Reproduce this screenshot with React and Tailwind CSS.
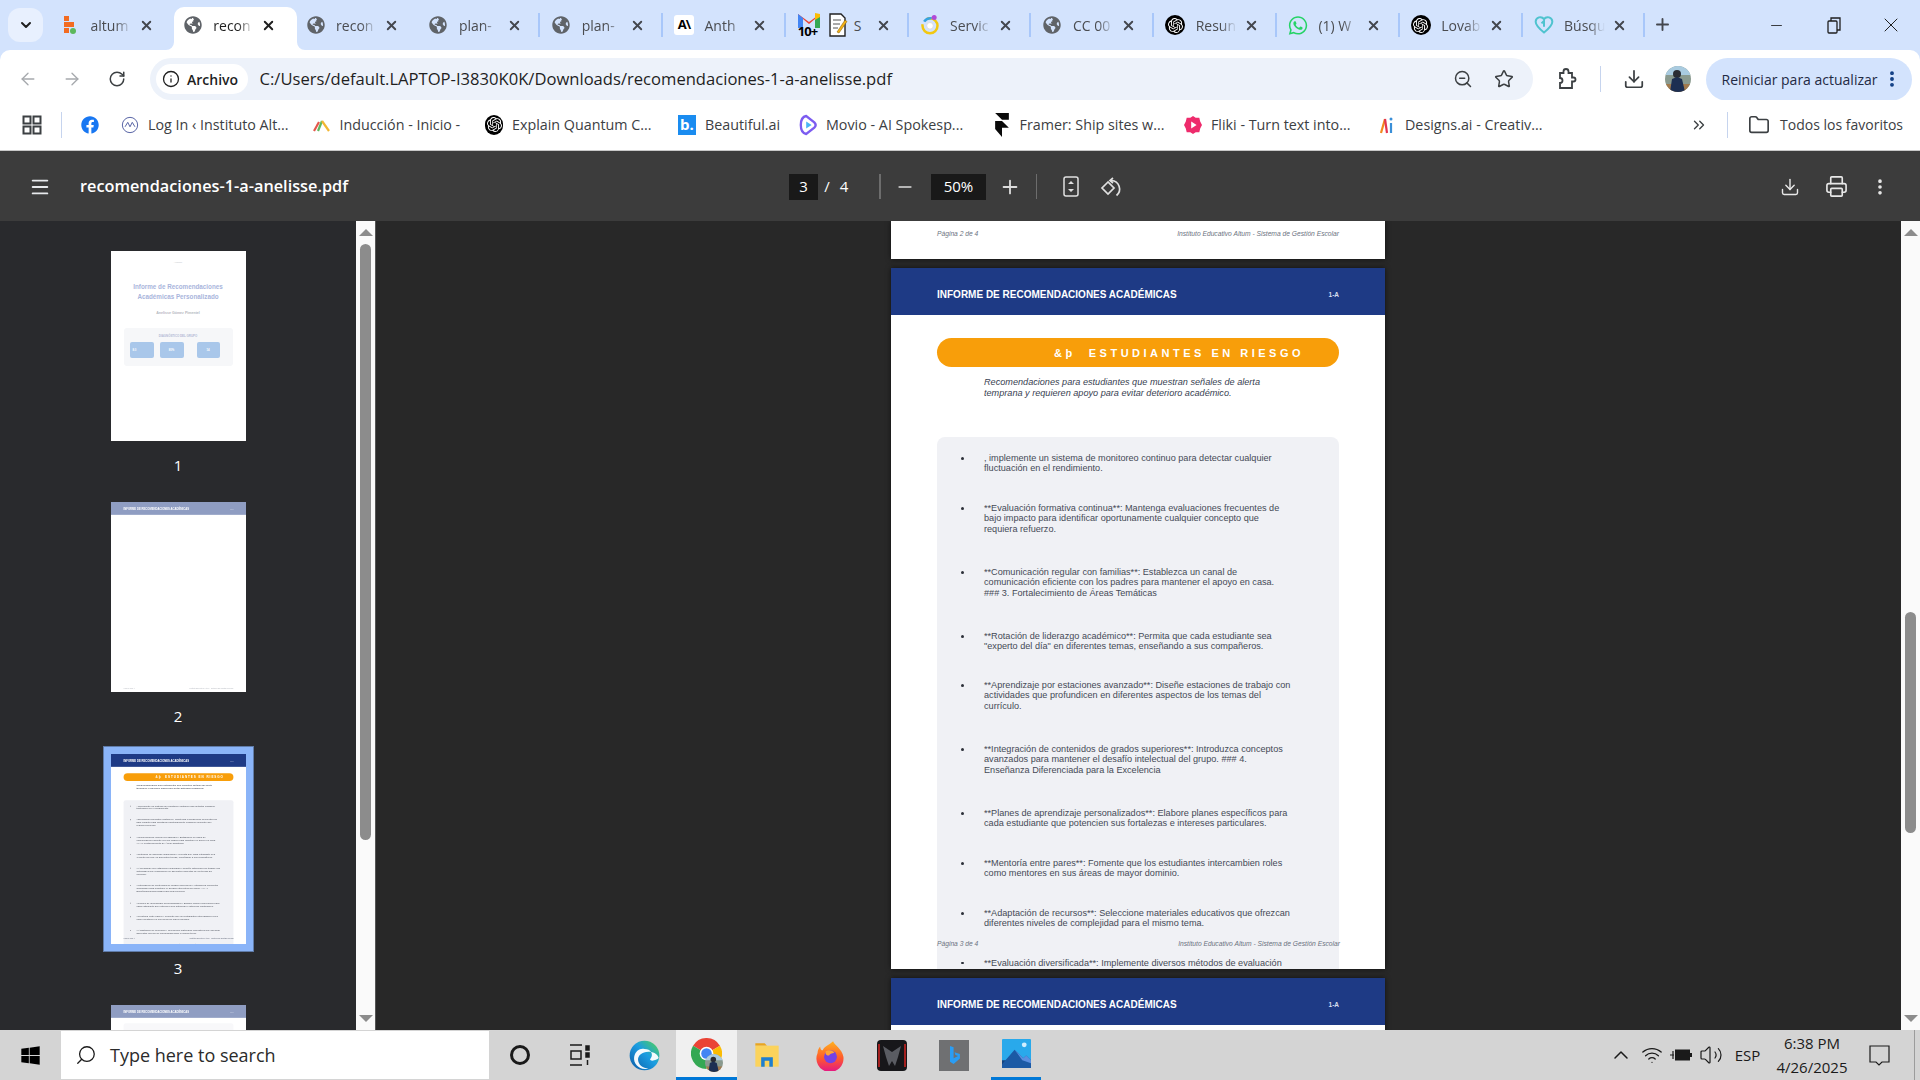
import { ArrowLeft, ArrowRight, RotateCw, Info, ZoomOut, Star, Download, EllipsisVertical, ChevronDown, ChevronUp, ChevronsRight, Folder, Menu, Minus, Plus, Printer, Search, X, Wifi, Volume2 } from "lucide-react";
import { FaGlobeAmericas, FaFacebook, FaWhatsapp, FaWindows } from "react-icons/fa";
import { SiOpenai } from "react-icons/si";

const Globe = () => <FaGlobeAmericas size={18} className="text-[#5f6368]" />;

const OpenAi = ({ size = 20 }) => (
  <span className="flex items-center justify-center rounded-full bg-black" style={{ width: size, height: size }}>
    <SiOpenai size={size - 5} className="text-white" />
  </span>
);

const Altum = () => (
  <svg width="14" height="20" viewBox="0 0 14 20">
    <rect x="1" y="1" width="5" height="5" fill="#f26b21" />
    <rect x="1" y="7" width="10" height="5" fill="#f26b21" />
    <rect x="1" y="13" width="5" height="5" fill="#f26b21" />
    <circle cx="10" cy="16" r="3" fill="#5cb85c" />
  </svg>
);

const Gmail10 = () => (
  <span className="relative block h-[28px] w-[24px]">
    <svg width="24" height="18" viewBox="0 0 24 18">
      <path d="M1 17V3l11 8 11-8v14h-5V8l-6 5-6-5v9z" fill="#ea4335" />
      <path d="M1 3v14h5V7z" fill="#4285f4" />
      <path d="M23 3v14h-5V7z" fill="#34a853" />
      <path d="M18 2l5 1v3l-5 3z" fill="#fbbc04" />
    </svg>
    <span className="absolute left-[1px] top-[13px] text-[13px] font-bold leading-[14px] tracking-[-1px] text-black">10+</span>
  </span>
);

const Note = () => (
  <svg width="20" height="26" viewBox="0 0 20 26">
    <path d="M2 2h11l4 4v18H2z" fill="#fff" stroke="#222" strokeWidth="1.4" />
    <path d="M5 8h8M5 12h7M5 16h5" stroke="#555" />
    <path d="M9 20L17 8l2 1.5L11 21z" fill="#f5b316" stroke="#7a5200" strokeWidth=".5" />
  </svg>
);

const ServIcon = () => (
  <svg width="24" height="26" viewBox="0 0 24 26" fill="none">
    <circle cx="12" cy="14" r="9" stroke="#f2c811" strokeWidth="3" strokeDasharray="30 8" />
    <path d="M5 9a9 9 0 0 1 9-4" stroke="#37a3e0" strokeWidth="3" />
    <circle cx="17" cy="4" r="3" fill="#b04ad8" />
    <circle cx="12" cy="14" r="4" fill="#fff" stroke="#d8d8d8" />
  </svg>
);

const Lovable = () => (
  <svg width="20" height="20" viewBox="0 0 24 24" fill="none" stroke="#4fc3cf" strokeWidth="2.4">
    <path d="M12 21C6 16 2 12 2 8a5.500 5.500 0 0 1 10-3 5.500 5.500 0 0 1 10 3c0 4-4 8-10 13z" />
    <path d="M12 14V7l-3 3" />
  </svg>
);

const tabs = [
  { icon: <Altum />, label: "altum" },
  { icon: <Globe />, label: "recon", active: true },
  { icon: <Globe />, label: "recon" },
  { icon: <Globe />, label: "plan-", sep: true },
  { icon: <Globe />, label: "plan-", sep: true },
  { icon: <span className="flex h-[20px] w-[20px] items-center justify-center rounded-[3px] bg-white text-[13px] font-bold tracking-[-1px] text-black">A\</span>, label: "Anth", sep: true },
  { icon: null, label: "S", gmail: true, sep: true },
  { icon: <ServIcon />, label: "Servic", sep: true },
  { icon: <Globe />, label: "CC 00", sep: true },
  { icon: <OpenAi />, label: "Resun", sep: true },
  { icon: <FaWhatsapp size={21} className="text-[#25d366]" />, label: "(1) W", sep: true },
  { icon: <OpenAi />, label: "Lovab", sep: true },
  { icon: <Lovable />, label: "Búsqu", sep: true },
];

const Tab = ({ tab }) => (
  <div className={`relative mt-[7px] flex h-[43px] w-[122.8px] shrink-0 items-center pb-[7px] ${tab.active ? "rounded-t-[10px] bg-white text-[#1f1f1f]" : "text-[#4a4c50]"}`}>
    {tab.active && (
      <>
        <svg className="absolute bottom-0 left-[-8px]" width="8" height="8" viewBox="0 0 8 8"><path d="M8 0v8H0a8 8 0 0 0 8-8z" fill="#fff" /></svg>
        <svg className="absolute bottom-0 right-[-8px]" width="8" height="8" viewBox="0 0 8 8"><path d="M0 0v8h8a8 8 0 0 1-8-8z" fill="#fff" /></svg>
      </>
    )}
    {tab.gmail ? (
      <>
        <span className="ml-[9px] flex w-[24px] justify-center"><Gmail10 /></span>
        <span className="ml-[7px] flex w-[20px] justify-center"><Note /></span>
        <span className="ml-[6px] w-[22px] overflow-hidden whitespace-nowrap text-[14px]">{tab.label}</span>
        <X size={15} strokeWidth={3} className="ml-[0.500px] shrink-0 text-[#44474e]" />
      </>
    ) : (
      <>
        <span className="ml-[9px] flex w-[20px] justify-center">{tab.icon}</span>
        <span className="ml-[10.500px] w-[41px] overflow-hidden whitespace-nowrap text-[14px] [mask-image:linear-gradient(to_right,black_60%,transparent)]">{tab.label}</span>
        <X size={15} strokeWidth={3} className={`ml-[7px] shrink-0 ${tab.active ? "text-[#1f1f1f]" : "text-[#44474e]"}`} />
      </>
    )}
    {tab.sep && <span className="absolute right-[2px] top-[6px] h-[24px] w-[2px] bg-[#a8c7fa]" />}
  </div>
);

const TabStrip = () => (
  <div className="flex h-[50px] shrink-0 bg-[#d3e3fd]">
    <div className="ml-[8px] mt-[8px] flex h-[34px] w-[35px] items-center justify-center rounded-[12px] bg-[#e8f0fe]">
      <ChevronDown size={16} strokeWidth={3} className="text-[#1f1f1f]" />
    </div>
    <div className="ml-[8px] flex">
      {tabs.map((tab, i) => <Tab key={i} tab={tab} />)}
    </div>
    <Plus size={19} strokeWidth={2.4} className="ml-[6px] mt-[15px] text-[#44474e]" />
    <div className="ml-auto flex h-[50px] text-[#1f1f1f]">
      <div className="flex w-[57px] items-center justify-center"><Minus size={17} strokeWidth={1.2} /></div>
      <div className="flex w-[57px] items-center justify-center">
        <svg width="14" height="17" viewBox="0 0 14 17" fill="none" stroke="currentColor" strokeWidth="1.3"><rect x="1" y="4" width="9" height="12" rx="1" /><path d="M4 4V1h9v12h-3" /></svg>
      </div>
      <div className="mr-[1px] flex w-[57px] items-center justify-center"><X size={24} strokeWidth={1} /></div>
    </div>
  </div>
);

const Avatar = ({ size = 26 }) => (
  <svg width={size} height={size} viewBox="0 0 26 26">
    <defs><clipPath id="av"><circle cx="13" cy="13" r="13" /></clipPath></defs>
    <g clipPath="url(#av)">
      <rect width="26" height="26" fill="#8a9a8f" />
      <rect width="26" height="9" fill="#a9cbe0" />
      <rect y="18" width="26" height="8" fill="#a27a4d" />
      <circle cx="12" cy="8" r="4" fill="#2a2c33" />
      <path d="M5 26l2-13 5-2 5 2 3 13z" fill="#1d2f52" />
    </g>
  </svg>
);

const Extension = () => (
  <svg width="22" height="24" viewBox="0 0 22 24" fill="none" stroke="#3c4043" strokeWidth="1.800">
    <path d="M4 6h3.500V4.500a2.500 2.500 0 0 1 5 0V6H16v4.500h1.500a2 2 0 0 1 0 4H16V21H4v-5a2.500 2.500 0 0 0 0-5z" />
  </svg>
);

const AddressBar = () => (
  <div className="flex h-[50px] shrink-0 items-center rounded-t-[10px] bg-white pl-[6px] pt-[8px] text-[#5f6368]">
    <div className="flex w-[44px] justify-center text-[#a6a9ad]"><ArrowLeft size={20} strokeWidth={1.6} /></div>
    <div className="flex w-[44px] justify-center text-[#a6a9ad]"><ArrowRight size={20} strokeWidth={1.6} /></div>
    <div className="flex w-[46px] justify-center text-[#3c4043]"><RotateCw size={18} strokeWidth={2} /></div>
    <div className="ml-[10px] flex h-[42px] w-[1382.500px] items-center rounded-full bg-[#edf2fa] pl-[6px] pr-[19px]">
      <div className="flex h-[30px] w-[92px] items-center rounded-full bg-white pl-[6px] text-[#1f1f1f]">
        <Info size={18} strokeWidth={1.7} />
        <span className="ml-[7px] text-[14px] font-semibold">Archivo</span>
      </div>
      <span className="ml-[11.500px] whitespace-nowrap text-[16.600px] text-[#1f1f1f]">C:/Users/default.LAPTOP-I3830K0K/Downloads/recomendaciones-1-a-anelisse.pdf</span>
      <ZoomOut size={20} strokeWidth={1.8} className="ml-auto text-[#3c4043]" />
      <Star size={20} strokeWidth={1.8} className="ml-[21px] text-[#3c4043]" />
    </div>
    <div className="ml-[17px] flex w-[34px] justify-center"><Extension /></div>
    <span className="ml-[16px] h-[26px] w-[1px] bg-[#c6d4ee]" />
    <div className="ml-[16px] flex w-[34px] justify-center text-[#3c4043]"><Download size={22} strokeWidth={1.9} /></div>
    <div className="ml-[14px]"><Avatar /></div>
    <div className="ml-[15px] flex h-[43px] w-[206px] items-center rounded-full bg-[#d3e3fd] pl-[16px] text-[#1f2a44]">
      <span className="whitespace-nowrap text-[14px]">Reiniciar para actualizar</span>
      <EllipsisVertical size={20} strokeWidth={2.6} className="ml-auto mr-[10px] text-[#0b3a82]" />
    </div>
  </div>
);

const Instituto = () => (
  <svg width="20" height="20" viewBox="0 0 20 20" fill="none" stroke="#5763a5" strokeWidth="1.100"><circle cx="10" cy="10" r="8.500" /><path d="M4.500 12l3-5 2.500 5 2.500-5 3 5" /></svg>
);
const Induccion = () => (
  <svg width="18" height="14" viewBox="0 0 18 14" fill="none" strokeWidth="2.200"><path d="M1 13L6 4" stroke="#e4574c" /><path d="M5 13l4-10" stroke="#5fb760" /><path d="M9 3l7 10" stroke="#f2b632" /></svg>
);
const BeautifulAi = () => (
  <span className="flex h-[20px] w-[20px] items-center justify-center bg-[#1a8cf0] text-[15px] font-bold leading-none text-white">b.</span>
);
const Movio = () => (
  <svg width="20" height="24" viewBox="0 0 20 24" fill="none">
    <path d="M8 2C3 3 2 7 2 12s1 9 6 10l9-7c2-2 2-4 0-6z" stroke="#7c5cf0" strokeWidth="2.600" />
    <path d="M8 8l6 4-6 4z" fill="#49b6f5" />
  </svg>
);
const Framer = () => <svg width="16" height="24" viewBox="0 0 14 21"><path d="M1 0h12v6H7zM1 7h6l6 6H7v8L1 14z" fill="#0a0a0a" /></svg>;
const Fliki = () => (
  <svg width="20" height="22" viewBox="0 0 20 22"><path d="M10 1l3 2 4 0 1 4 2 4-2 4-1 4-4 0-3 2-3-2-4 0-1-4-2-4 2-4 1-4 4 0z" fill="#ee2b6c" /><path d="M8 7l6 4-6 4z" fill="#fff" /></svg>
);
const DesignsAi = () => (
  <svg width="14" height="18" viewBox="0 0 14 18" strokeWidth="2.200" fill="none"><path d="M1 17L5 3" stroke="#f28a1e" /><path d="M5 3l2 14" stroke="#e4344f" /><path d="M11 7v10" stroke="#3a8fd8" /><circle cx="11" cy="3" r="1.500" fill="#3a8fd8" /></svg>
);

const bookmarks = [
  { icon: <FaFacebook size={20} className="text-[#1877f2]" />, text: "", w: "w-[40px]" },
  { icon: <Instituto />, text: "Log In ‹ Instituto Alt...", w: "w-[191.500px]" },
  { icon: <Induccion />, text: "Inducción - Inicio -", w: "w-[172.500px]" },
  { icon: <OpenAi />, text: "Explain Quantum C...", w: "w-[193px]" },
  { icon: <BeautifulAi />, text: "Beautiful.ai", w: "w-[121px]" },
  { icon: <Movio />, text: "Movio - AI Spokesp...", w: "w-[193.600px]" },
  { icon: <Framer />, text: "Framer: Ship sites w...", w: "w-[191.400px]" },
  { icon: <Fliki />, text: "Fliki - Turn text into...", w: "w-[194px]" },
  { icon: <DesignsAi />, text: "Designs.ai - Creativ...", w: "w-[190px]" },
];

const Bookmarks = () => (
  <div className="flex h-[50px] shrink-0 items-center bg-white pb-[1px] pl-[20px] text-[#3c4043]">
    <svg width="24" height="24" viewBox="0 0 24 24" fill="none" stroke="#3c4043" strokeWidth="2"><rect x="3.500" y="3.500" width="7" height="7" /><rect x="13.500" y="3.500" width="7" height="7" /><rect x="3.500" y="13.500" width="7" height="7" /><rect x="13.500" y="13.500" width="7" height="7" /></svg>
    <span className="ml-[17px] h-[26px] w-[1px] bg-[#c6d4ee]" />
    <div className="ml-[19px] flex text-[14.300px]">
      {bookmarks.map((b, i) => (
        <div key={i} className={`flex shrink-0 items-center ${b.w}`}>
          <span className="flex h-[24px] w-[18px] items-center justify-center">{b.icon}</span>
          {b.text && <span className="ml-[9px] whitespace-nowrap">{b.text}</span>}
        </div>
      ))}
    </div>
    <div className="ml-auto flex items-center pr-[17px] text-[14px]">
      <ChevronsRight size={18} strokeWidth={1.8} />
      <span className="ml-[19px] h-[26px] w-[1px] bg-[#c6d4ee]" />
      <Folder size={22} strokeWidth={1.800} className="ml-[20px]" />
      <span className="ml-[10px] whitespace-nowrap">Todos los favoritos</span>
    </div>
  </div>
);

const PdfToolbar = () => (
  <div className="flex h-[71px] shrink-0 items-center border-t border-[#c8c8c8] bg-[#3c3c3c] pl-[28px] pr-[28px] pt-[1px] text-white">
    <Menu size={22} strokeWidth={2} className="mx-[1px] text-[#e8eaed]" />
    <span className="ml-[28px] w-[709px] shrink-0 whitespace-nowrap text-[16.300px] font-semibold">recomendaciones-1-a-anelisse.pdf</span>
    <span className="flex h-[26px] w-[29px] items-center justify-center bg-[#191919] text-[15px]">3</span>
    <span className="ml-[4px] w-[10px] text-center text-[15px]">/</span>
    <span className="ml-[6px] w-[12px] text-center text-[15px]">4</span>
    <span className="ml-[29px] h-[25px] w-[2px] bg-[#6d6d6d]" />
    <div className="ml-[12px] flex w-[24px] justify-center"><Minus size={20} strokeWidth={2} className="text-[#dcdcdc]" /></div>
    <span className="ml-[14px] flex h-[26px] w-[55px] items-center justify-center bg-[#191919] text-[15px]">50%</span>
    <div className="ml-[12px] flex w-[24px] justify-center"><Plus size={22} strokeWidth={2} className="text-[#dcdcdc]" /></div>
    <span className="ml-[14px] h-[25px] w-[1px] bg-[#6d6d6d]" />
    <div className="ml-[22px] flex w-[24px] justify-center">
      <svg width="16" height="22" viewBox="0 0 16 22" fill="none"><rect x="1" y="1" width="14" height="19" rx="2" stroke="#e0e0e0" strokeWidth="1.500" /><path d="M8 5l3 3H5zM8 16l-3-3h6z" fill="#e0e0e0" /></svg>
    </div>
    <div className="ml-[16px] flex w-[24px] justify-center">
      <svg width="24" height="24" viewBox="0 0 24 24" fill="none" stroke="#e0e0e0" strokeWidth="1.700"><path d="M9 7l-6 6 6 6 6-6z" /><path d="M11 5.500h1.500a8.500 8.500 0 0 1 5 15" /><path d="M14 3l-3 2.500 3 2.500" /></svg>
    </div>
    <div className="ml-auto flex w-[24px] justify-center"><Download size={20} strokeWidth={1.700} className="text-[#e8e8e8]" /></div>
    <div className="ml-[22px] flex w-[24px] justify-center"><Printer size={23} strokeWidth={1.700} className="text-[#e8e8e8]" /></div>
    <div className="ml-[20px] flex w-[24px] justify-center"><EllipsisVertical size={20} strokeWidth={2.400} className="text-[#e8e8e8]" /></div>
  </div>
);

const recs = [
  { h: "h-[50px]", lines: [", implemente un sistema de monitoreo continuo para detectar cualquier", "fluctuación en el rendimiento."] },
  { h: "h-[64px]", lines: ["**Evaluación formativa continua**: Mantenga evaluaciones frecuentes de", "bajo impacto para identificar oportunamente cualquier concepto que", "requiera refuerzo."] },
  { h: "h-[64px]", lines: ["**Comunicación regular con familias**: Establezca un canal de", "comunicación eficiente con los padres para mantener el apoyo en casa.", "### 3. Fortalecimiento de Áreas Temáticas"] },
  { h: "h-[49px]", lines: ["**Rotación de liderazgo académico**: Permita que cada estudiante sea", "\"experto del día\" en diferentes temas, enseñando a sus compañeros."] },
  { h: "h-[64px]", lines: ["**Aprendizaje por estaciones avanzado**: Diseñe estaciones de trabajo con", "actividades que profundicen en diferentes aspectos de los temas del", "currículo."] },
  { h: "h-[64px]", lines: ["**Integración de contenidos de grados superiores**: Introduzca conceptos", "avanzados para mantener el desafío intelectual del grupo. ### 4.", "Enseñanza Diferenciada para la Excelencia"] },
  { h: "h-[50px]", lines: ["**Planes de aprendizaje personalizados**: Elabore planes específicos para", "cada estudiante que potencien sus fortalezas e intereses particulares."] },
  { h: "h-[50px]", lines: ["**Mentoría entre pares**: Fomente que los estudiantes intercambien roles", "como mentores en sus áreas de mayor dominio."] },
  { h: "h-[49.500px]", lines: ["**Adaptación de recursos**: Seleccione materiales educativos que ofrezcan", "diferentes niveles de complejidad para el mismo tema."] },
  { h: "h-[64px]", lines: ["**Evaluación diversificada**: Implemente diversos métodos de evaluación"] },
];

const DocHeader = () => (
  <div className="flex h-[47px] items-center justify-between bg-[#1e3a85] px-[46px] pt-[5px] font-['Liberation_Sans',Arial,sans-serif] font-bold text-white">
    <span className="whitespace-nowrap text-[10px]">INFORME DE RECOMENDACIONES ACADÉMICAS</span>
    <span className="mt-[1px] text-[6.500px] text-[#d7deee]">1-A</span>
  </div>
);

const DocFooter = ({ page }) => (
  <div className="flex justify-between whitespace-nowrap font-['Liberation_Sans',Arial,sans-serif] text-[6.700px] italic leading-[8px] text-[#6b7280]">
    <span>Página {page} de 4</span>
    <span>Instituto Educativo Altum - Sistema de Gestión Escolar</span>
  </div>
);

const Page3 = () => (
  <div className="relative h-[701px] w-[494px] overflow-hidden bg-white font-['Liberation_Sans',Arial,sans-serif]">
    <DocHeader />
    <div className="mx-[46px] mt-[23px] flex h-[29px] items-center rounded-full bg-[#f89e0a] pl-[117px] pt-[1px] text-[11px] font-bold tracking-[3.500px] text-white">
      <span className="whitespace-nowrap">&þ&nbsp; ESTUDIANTES EN RIESGO</span>
    </div>
    <div className="mt-[10px] pl-[93px] text-[9.150px] italic leading-[11px] text-[#374151]">
      <p className="whitespace-nowrap">Recomendaciones para estudiantes que muestran señales de alerta</p>
      <p className="whitespace-nowrap">temprana y requieren apoyo para evitar deterioro académico.</p>
    </div>
    <div className="mx-[46px] mt-[38px] rounded-t-[8px] bg-[#f0f1f5] pt-[16px]">
      {recs.map((r, i) => (
        <div key={i} className={`relative pl-[47px] text-[9.150px] leading-[10.400px] text-[#454a55] ${r.h}`}>
          <span className="absolute left-[24px] top-[4px] h-[2.500px] w-[2.500px] rounded-full bg-[#2b2f38]" />
          {r.lines.map((l, j) => <p key={j} className="whitespace-nowrap">{l}</p>)}
        </div>
      ))}
    </div>
    <div className="absolute left-[46px] right-[45px] top-[672px]"><DocFooter page={3} /></div>
  </div>
);

// page 1 thumbnail, drawn at thumbnail size with washed out colours
const ThumbOne = () => (
  <div className="flex h-full flex-col items-center bg-white pt-[10px] font-['Liberation_Sans',Arial,sans-serif] text-[#b9bdc6]">
    <span className="text-[2.500px] leading-[4px]">ALTUM</span>
    <p className="mt-[17px] text-center text-[6.300px] font-bold leading-[10px] text-[#a9b5dc]">Informe de Recomendaciones<br />Académicas Personalizado</p>
    <span className="mt-[8px] text-[3.600px] font-bold leading-[6px] text-[#b5b8c0]">Anelisse Gómez Pimentel</span>
    <div className="mt-[12px] h-[38px] w-[109px] rounded-[3px] bg-[#f6f7f9] pt-[6px]">
      <p className="text-center text-[2.900px] font-bold leading-[4px] text-[#b2b9d4]">DIAGNÓSTICO DEL GRUPO</p>
      <div className="ml-[6px] mt-[4px] flex text-[2.800px] font-bold text-white">
        <span className="h-[16px] w-[24px] rounded-[2px] bg-[#a9c7ea] pl-[3px] leading-[16px]">8.0</span>
        <span className="ml-[6px] h-[16px] w-[24px] rounded-[2px] bg-[#a9c7ea] text-center leading-[16px]">80%</span>
        <span className="ml-[13px] h-[16px] w-[23px] rounded-[2px] bg-[#a9c7ea] text-center leading-[16px]">14</span>
      </div>
    </div>
  </div>
);

const Scaled = ({ children }) => (
  <div className="h-[701px] w-[494px] origin-top-left scale-[0.2733] bg-white">{children}</div>
);

const ThumbTwo = () => (
  <div className="relative h-full overflow-hidden">
    <Scaled>
      <DocHeader />
      <div className="px-[46px] pt-[630px]"><DocFooter page={2} /></div>
    </Scaled>
    <div className="absolute inset-0 bg-white/50" />
  </div>
);

const ThumbThree = () => <div className="h-full overflow-hidden"><Scaled><Page3 /></Scaled></div>;

const ThumbFour = () => (
  <div className="relative h-full overflow-hidden">
    <Scaled>
      <DocHeader />
      <div className="mx-[46px] mt-[20px] h-[600px] rounded-t-[8px] bg-[#f0f1f5]" />
    </Scaled>
    <div className="absolute inset-0 bg-white/50" />
  </div>
);

const thumbs = [
  { n: 1, el: <ThumbOne /> },
  { n: 2, el: <ThumbTwo /> },
  { n: 3, el: <ThumbThree />, selected: true },
  { n: 4, el: <ThumbFour /> },
];

const Sidebar = () => (
  <div className="flex h-full w-[356px] shrink-0 flex-col items-center overflow-hidden bg-[#292a2d] pt-[22px]">
    {thumbs.map((t) => (
      <div key={t.n} className="flex shrink-0 flex-col items-center">
        <div className={`h-[206px] w-[151px] p-[8px] ${t.selected ? "bg-[#8ab4f8] outline outline-1 -outline-offset-1 outline-[#5f7ba8]" : ""}`}>
          <div className="h-[190px] w-[135px]">{t.el}</div>
        </div>
        <div className="h-[45.300px] pt-[5px] text-[15px] leading-[22px] text-white">{t.n}</div>
      </div>
    ))}
  </div>
);

const Scrollbar = ({ thumb }) => (
  <div className="flex h-full w-[19px] shrink-0 flex-col items-center bg-[#fafafa] pb-[8px] pt-[8px]">
    <svg width="14" height="7" viewBox="0 0 14 7" className="shrink-0"><path d="M7 0l7 7H0z" fill="#8c8c8c" /></svg>
    <div className={`w-[11px] rounded-full bg-[#8c8c8c] ${thumb}`} />
    <svg width="14" height="7" viewBox="0 0 14 7" className="mt-auto shrink-0"><path d="M7 7L0 0h14z" fill="#8c8c8c" /></svg>
  </div>
);

const Viewer = () => (
  <div className="flex h-[809px] min-w-0 flex-1 flex-col items-center overflow-hidden bg-[#282828] pr-[1px]">
    <div className="h-[38px] w-[494px] shrink-0 bg-white px-[46px] pt-[9px] shadow-[0_0_5px_rgba(0,0,0,0.6)]">
      <DocFooter page={2} />
    </div>
    <div className="mt-[9px] shrink-0 shadow-[0_0_5px_rgba(0,0,0,0.6)]"><Page3 /></div>
    <div className="mt-[9px] h-[300px] w-[494px] shrink-0 bg-white shadow-[0_0_5px_rgba(0,0,0,0.6)]"><DocHeader /></div>
  </div>
);

const ChromeLogo = () => (
  <svg width="31" height="31" viewBox="0 0 24 24" fill="none" strokeWidth="8">
    <path d="M5.070 8A8 8 0 0 1 18.930 8" stroke="#ea4335" />
    <path d="M18.930 8A8 8 0 0 1 12 20" stroke="#fbbc04" />
    <path d="M12 20A8 8 0 0 1 5.070 8" stroke="#34a853" />
    <circle cx="12" cy="12" r="5.300" fill="#fff" stroke="none" />
    <circle cx="12" cy="12" r="4.100" fill="#4285f4" stroke="none" />
  </svg>
);

const EdgeLogo = () => (
  <svg width="31" height="31" viewBox="0 0 24 24">
    <defs>
      <linearGradient id="edge" x1="0" y1="1" x2="1" y2="0">
        <stop offset="0" stopColor="#0c59a4" /><stop offset=".55" stopColor="#1b9de2" /><stop offset="1" stopColor="#54d64b" />
      </linearGradient>
    </defs>
    <circle cx="12" cy="12" r="11.500" fill="url(#edge)" />
    <path d="M23 14c-1-4-5-5-8-5-5 0-8 3-8 6 0 4 4 7 8 7-6 2-12-3-11-9C5 8 9 6 12 7c5 0 7 4 5 7-1 1-1 2 1 2 2 0 4-1 5-2z" fill="#fff" opacity=".95" />
  </svg>
);

const FolderTile = () => (
  <svg width="28" height="26" viewBox="0 0 24 22">
    <path d="M2 1h8l2 2H2z" fill="#e9a520" />
    <rect x="2" y="3" width="20" height="18" fill="#fbd35c" />
    <path d="M7 21v-8h10v8h-3v-5h-4v5z" fill="#1f7fd0" />
  </svg>
);

const FirefoxLogo = () => (
  <svg width="31" height="31" viewBox="0 0 24 24">
    <defs>
      <linearGradient id="ff" x1="0" y1="0" x2="0" y2="1">
        <stop offset="0" stopColor="#ffb21f" /><stop offset=".55" stopColor="#ff5a2c" /><stop offset="1" stopColor="#e31587" />
      </linearGradient>
    </defs>
    <path d="M14 1c1 3 7 6 8 12A10.500 10.500 0 1 1 2 10c0-2 1-4 2-5 0 2 1 3 2 3 1-3 5-4 8-7z" fill="url(#ff)" />
    <circle cx="12" cy="13" r="5" fill="#7542e5" />
    <path d="M8 9c3-2 6-1 7 1-2 0-4 1-4 2-2 0-3-1-3-3z" fill="#ffa436" />
  </svg>
);

const PredatorTile = () => (
  <svg width="30" height="31" viewBox="0 0 30 31">
    <rect width="30" height="31" rx="4" fill="#17171a" />
    <path d="M1 4h2v23H1zM27 4h2v23h-2z" fill="#a3201f" />
    <path d="M6 6l9 6 9-6-3 11-3 9-3-5-3 5-3-9z" fill="#5a5c62" />
  </svg>
);

const BingTile = () => (
  <span className="flex h-[31px] w-[30px] items-center justify-center bg-[#6f7072]">
    <svg width="11" height="18" viewBox="0 0 12 20"><path d="M1 0l4 1.500v12l5-2.500-3-1-1-3 6 2v5L5 20l-4-2.500z" fill="#2a9df4" /></svg>
  </span>
);

const PhotosTile = () => (
  <svg width="29" height="29" viewBox="0 0 30 30">
    <rect width="30" height="30" rx="1" fill="#29a9eb" />
    <rect y="22" width="30" height="8" fill="#15437f" />
    <path d="M0 26l13-15 9 9 3-3 5 5v8H0z" fill="#1b5aa5" />
    <path d="M13 11l9 9 3-3 5 5v3l-9-3-8-11z" fill="#5a8fe0" />
    <circle cx="23" cy="6" r="2.500" fill="#cfeeff" />
  </svg>
);

const Taskbar = () => (
  <div className="flex h-[50px] shrink-0 items-center bg-[#d4d4d4] text-[#1a1a1a]">
    <div className="flex w-[61px] justify-center"><FaWindows size={21} className="text-black" /></div>
    <div className="flex h-[48px] w-[428px] items-center bg-white pl-[14px]">
      <Search size={22} strokeWidth={1.400} className="-scale-x-100" />
      <span className="ml-[13px] text-[18px] text-[#2b2b2b]">Type here to search</span>
    </div>
    <div className="flex w-[62px] justify-center">
      <span className="h-[20px] w-[20px] rounded-full border-[3px] border-[#1a1a1a]" />
    </div>
    <div className="flex w-[57px] justify-center">
      <svg width="22" height="26" viewBox="0 0 22 26" fill="none" stroke="#1a1a1a" strokeWidth="1.500"><path d="M1 3h12M1 23h12" /><rect x="2" y="9" width="10" height="8" /><rect x="17" y="4" width="3" height="4" fill="#1a1a1a" /><rect x="17" y="11" width="3" height="4" fill="#1a1a1a" /><path d="M18.500 18v5" /></svg>
    </div>
    <div className="ml-[6px] mr-[2px] flex w-[60px] justify-center"><EdgeLogo /></div>
    <div className="relative flex h-[50px] w-[61px] items-center justify-center border-b-[3px] border-[#0078d7] bg-[#f0f0f0]">
      <ChromeLogo />
      <span className="absolute left-[29px] top-[24px]"><Avatar size={18} /></span>
    </div>
    <div className="flex w-[60px] justify-center"><FolderTile /></div>
    <div className="flex w-[66px] justify-center"><FirefoxLogo /></div>
    <div className="flex w-[58px] justify-center"><PredatorTile /></div>
    <div className="flex w-[66px] justify-center"><BingTile /></div>
    <div className="ml-[4px] flex h-[50px] w-[50px] items-center justify-center border-b-[3px] border-[#0078d7]"><PhotosTile /></div>
    <div className="ml-auto flex items-center">
      <ChevronUp size={24} strokeWidth={1.500} />
      <Wifi size={22} strokeWidth={1.400} className="ml-[8px]" />
      <svg className="ml-[7px]" width="22" height="14" viewBox="0 0 22 14" fill="none"><path d="M0 7h4M3 3v8" stroke="#1a1a1a" strokeWidth="1.200" /><rect x="5" y="1.500" width="15" height="11" fill="#1a1a1a" /><rect x="20" y="5" width="2" height="4" fill="#1a1a1a" /></svg>
      <Volume2 size={24} strokeWidth={1.200} className="ml-[7px]" />
      <span className="ml-[11px] w-[27px] text-center text-[15px]">ESP</span>
      <div className="ml-[15px] flex w-[72px] flex-col items-center text-[15px] leading-[24px]">
        <span>6:38 PM</span>
        <span>4/26/2025</span>
      </div>
      <svg className="ml-[20px]" width="22" height="22" viewBox="0 0 22 22" fill="none" stroke="#1a1a1a" strokeWidth="1.200"><path d="M2 2h19v16h-7l-3 3-3-3H2z" /></svg>
      <span className="ml-[24px] h-[50px] w-[1px] bg-[#9c9c9c]" />
      <span className="w-[5px]" />
    </div>
  </div>
);

const App = () => {
  return (
    <div className="flex h-[1080px] w-[1920px] flex-col overflow-hidden bg-[#d3e3fd] font-['Open_Sans',sans-serif]">
      <TabStrip />
      <AddressBar />
      <Bookmarks />
      <PdfToolbar />
      <div className="flex h-[809px] shrink-0">
        <Sidebar />
        <Scrollbar thumb="mt-[8px] h-[596px]" />
        <span className="w-[1px] bg-[#555555]" />
        <Viewer />
        <Scrollbar thumb="mt-[376px] h-[221px]" />
      </div>
      <Taskbar />
    </div>
  );
};

export default App;
